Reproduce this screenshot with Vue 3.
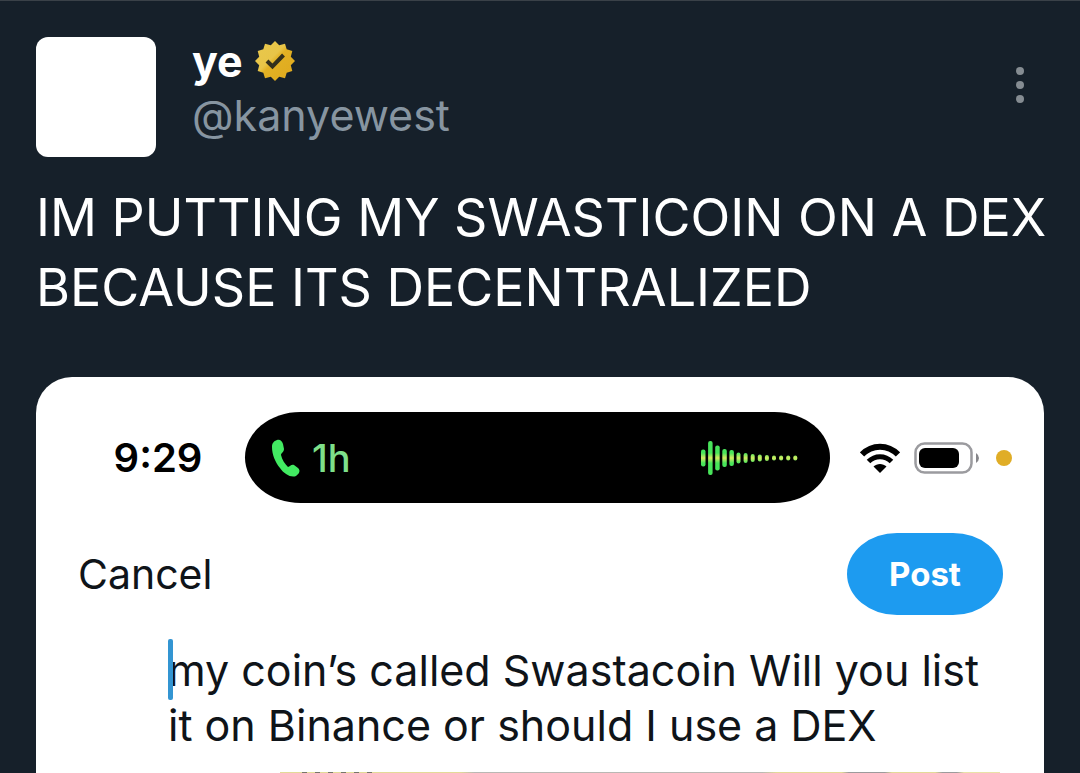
<script setup>
import { ref } from 'vue'

const draft = ref('my coin’s called Swastacoin Will you list it on Binance or should I use a DEX')
const bars = [17, 34, 25, 18, 16, 11, 10, 8, 7, 6, 5, 5, 5, 5]
</script>

<template>
  <article class="post">
    <header class="head">
      <div class="avatar"></div>
      <div class="names">
        <div class="name-row">
          <h1 class="name">ye</h1>
          <svg class="badge" viewBox="0 0 40 42" aria-label="Verified">
            <defs>
              <linearGradient id="gold" x1="0" y1="0" x2="1" y2="1">
                <stop offset="0" stop-color="#e9c84c" />
                <stop offset=".42" stop-color="#e8c548" />
                <stop offset=".5" stop-color="#e2b124" />
                <stop offset="1" stop-color="#dfa81d" />
              </linearGradient>
            </defs>
            <path fill="url(#gold)" d="M20 1 24.2 5.200 30 3.700 31.700 9.300 37.300 11 35.800 16.800 40 21 35.800 25.200 37.300 31 31.700 32.700 30 38.300 24.200 36.800 20 41 15.800 36.800 10 38.300 8.300 32.700 2.700 31 4.200 25.200 0 21 4.200 16.800 2.700 11 8.300 9.300 10 3.700 15.800 5.200Z" />
            <path d="M12 21 17.500 26.500 28.500 15" fill="none" stroke="#33301c" stroke-width="4" />
          </svg>
        </div>
        <a class="handle" href="#">@kanyewest</a>
      </div>
      <button class="more" type="button" aria-label="More">
        <svg viewBox="0 0 10 38"><g fill="#858c92"><circle cx="5" cy="5" r="4" /><circle cx="5" cy="19" r="4" /><circle cx="5" cy="33" r="4" /></g></svg>
      </button>
    </header>

    <p class="text">IM PUTTING MY SWASTICOIN ON A DEX BECAUSE ITS DECENTRALIZED</p>

    <section class="card">
      <div class="status">
        <time class="clock">9:29</time>
        <div class="island">
          <svg class="phone" viewBox="0 0 28 38">
            <path fill="#42ea62" d="M5 1C8 0 10 2 11 5L12 10C12 13 9 14 9 16C10 21 13 25 16 28C18 28 19 25 22 26L26 29C29 32 27 35 24 37C19 39 12 35 8 29C3 23 0 15 0 8C0 4 2 2 5 1Z" />
          </svg>
          <span class="duration">1h</span>
          <svg class="wave" viewBox="0 0 100 36">
            <defs>
              <linearGradient id="voice" gradientUnits="userSpaceOnUse" x1="0" y1="0" x2="0" y2="36">
                <stop offset=".36" stop-color="#48e45a" />
                <stop offset=".5" stop-color="#d4ec62" />
                <stop offset=".64" stop-color="#48e45a" />
              </linearGradient>
            </defs>
            <rect
              v-for="(h, i) in bars"
              :key="i"
              :x="1 + i * 7.100"
              :y="18 - h / 2"
              :width="i < 5 ? 4.500 : 4"
              :height="h"
              rx="2"
              fill="url(#voice)"
            />
          </svg>
        </div>
        <div class="signals">
          <svg class="wifi" viewBox="0 0 40 30">
            <g fill="none" stroke="#000">
              <path d="M2 11.500C12 1 28 1 38 11.500" stroke-width="6" />
              <path d="M8.500 18.500C15 12 25 12 31.500 18.500" stroke-width="5" />
            </g>
            <path d="M20 30 13.500 23.500C17 20 23 20 26.500 23.500Z" />
          </svg>
          <svg class="battery" viewBox="0 0 66 32">
            <rect x="1.500" y="1.500" width="56" height="29" rx="9" fill="#fff" stroke="#9b9b9f" stroke-width="2.500" />
            <rect x="5" y="6" width="40" height="20" rx="6" />
            <path d="M62 11Q65 13 65 16T62 21Z" fill="#86868a" />
          </svg>
          <span class="mic"></span>
        </div>
      </div>

      <div class="actions">
        <button class="cancel" type="button">Cancel</button>
        <button class="submit" type="button">Post</button>
      </div>

      <div class="compose">
        <span class="caret"></span>
        <textarea v-model="draft" class="draft" rows="2" aria-label="Post text"></textarea>
      </div>
      <div class="attachment"></div>
    </section>
  </article>
</template>

<style>
body {
  margin: 0;
  background: #16202a;
}
</style>

<style scoped>
.post {
  box-sizing: border-box;
  height: 100vh;
  overflow: hidden;
  padding: 36px 36px 0;
  border-top: 1px solid #3a4148;
  background: #16202a;
  color: #fff;
  font-family: Inter, "Liberation Sans", sans-serif;
}
button {
  padding: 0;
  border: 0;
  background: none;
  font-family: inherit;
}
svg {
  display: block;
}
.head {
  display: flex;
  align-items: flex-start;
}
.avatar {
  width: 120px;
  height: 120px;
  border-radius: 12px;
  background: #fff;
}
.names {
  flex: 1;
  margin-left: 36px;
}
.name-row {
  display: flex;
  align-items: center;
  gap: 12px;
  height: 48px;
}
.name {
  margin: 0;
  font-size: 43px;
  line-height: 48px;
}
.badge {
  width: 40px;
  height: 42px;
}
.handle {
  display: block;
  color: #8795a1;
  font-size: 43px;
  line-height: 60px;
  text-decoration: none;
}
.more {
  width: 48px;
  margin-top: 29px;
}
.more svg {
  width: 10px;
  height: 38px;
  margin: 0 auto;
}
.text {
  margin: 26px -12px 54px 0;
  font-size: 52px;
  line-height: 70px;
}
.card {
  padding-top: 35px;
  border-radius: 36px 36px 0 0;
  background: #fff;
  color: #0f1419;
}
.status {
  display: flex;
  align-items: center;
}
.clock {
  width: 209px;
  padding-left: 35px;
  box-sizing: border-box;
  text-align: center;
  color: #000;
  font-size: 40px;
  font-weight: 600;
}
.island {
  display: flex;
  flex: 1;
  align-items: center;
  height: 91px;
  padding: 0 30px 0 27px;
  border-radius: 56px / 46px;
  background: #000;
}
.phone {
  width: 28px;
  height: 38px;
}
.duration {
  flex: 1;
  margin-left: 12px;
  color: #7ee08a;
  font-size: 38px;
  font-weight: 500;
}
.wave {
  width: 100px;
  height: 36px;
}
.signals {
  display: flex;
  align-items: center;
  gap: 14px;
  margin: 0 32px 0 30px;
}
.wifi {
  width: 40px;
  height: 30px;
}
.battery {
  width: 66px;
  height: 32px;
}
.mic {
  width: 16px;
  height: 16px;
  margin-left: 2px;
  border-radius: 50%;
  background: #e0ad26;
}
.actions {
  display: flex;
  align-items: center;
  justify-content: space-between;
  margin: 30px 41px 0 42px;
}
.cancel {
  color: #0f1419;
  font-size: 41px;
}
.submit {
  width: 156px;
  height: 82px;
  border-radius: 50px / 41px;
  background: #1d9bf0;
  color: #fff;
  font-size: 33px;
  font-weight: 700;
}
.compose {
  position: relative;
  margin: 28px 36px 0 132px;
}
.caret {
  position: absolute;
  top: -4px;
  left: 0;
  width: 5px;
  height: 61px;
  border-radius: 2px;
  background: #3395d2;
}
.draft {
  display: block;
  box-sizing: border-box;
  width: 100%;
  height: 110px;
  padding: 0;
  border: 0;
  outline: 0;
  resize: none;
  overflow: hidden;
  background: none;
  color: #0f1419;
  font-family: inherit;
  font-size: 43px;
  line-height: 55px;
}
.attachment {
  height: 36px;
  margin: 19px 44px 0 244px;
  background:
    repeating-linear-gradient(90deg, transparent 0 8px, #77756a 8px 13px) 14px 0 / 78px 100% no-repeat,
    linear-gradient(90deg, #e3da98 25%, #b9b8b4 27% 67%, #e3da98 69% 78%, #9c9b9c 79% 84%, #e3da98 85% 91%, #9c9b9c 92% 94%, #e9e2a8 95%);
}
</style>
